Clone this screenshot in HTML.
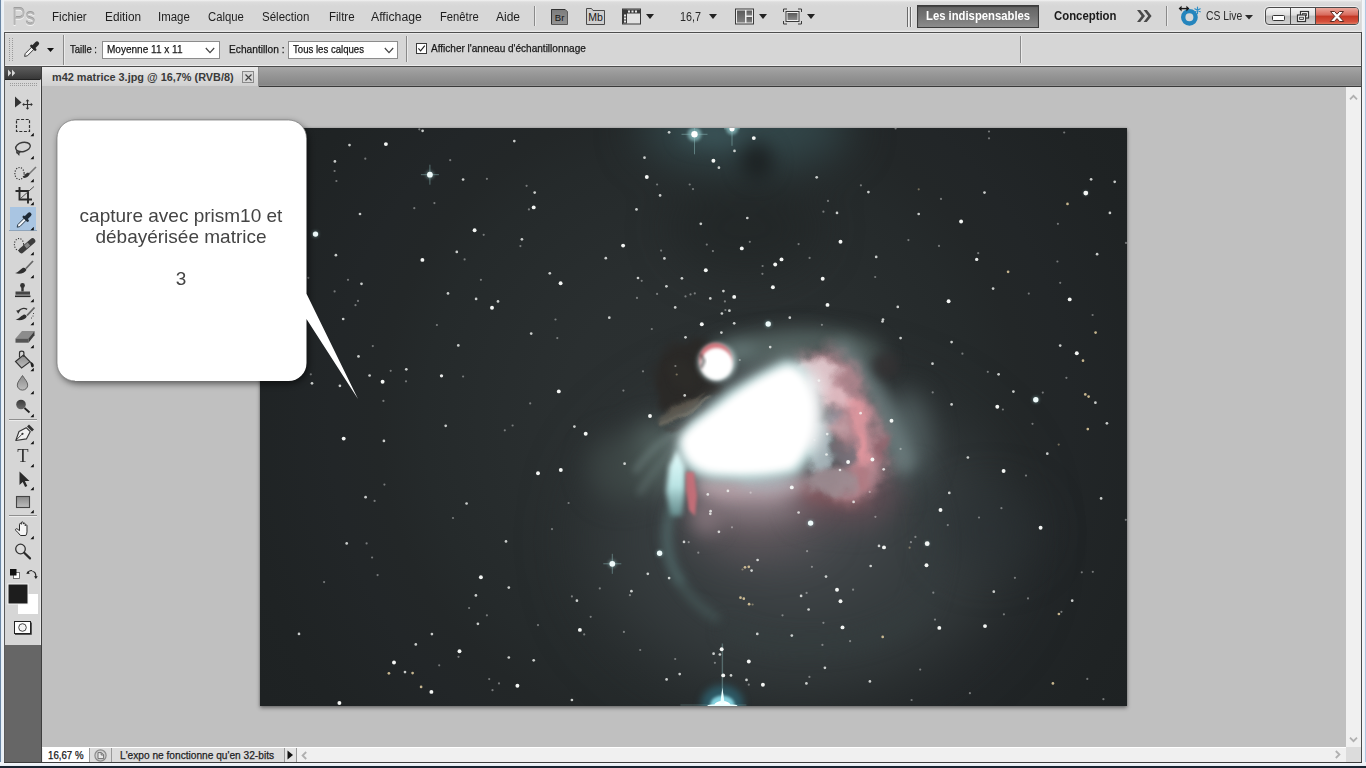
<!DOCTYPE html>
<html lang="fr">
<head>
<meta charset="utf-8">
<title>m42 matrice 3.jpg @ 16,7% (RVB/8)</title>
<style>
*{box-sizing:border-box;margin:0;padding:0}
html,body{width:1366px;height:768px;overflow:hidden;background:#1a2532}
body{font-family:"Liberation Sans",sans-serif;font-size:12px;color:#1a1a1a;position:relative}
#app,#app div,#app span,#app svg{position:absolute}
#app{left:0;top:0;width:1366px;height:768px;overflow:hidden;background:#d6d6d6}
.t{white-space:pre;line-height:1;transform-origin:0 0;display:block}
/* window frame */
#fl{left:0;top:0;width:4px;height:766px;background:linear-gradient(90deg,#6b87a5 0,#6b87a5 1px,#e4ecf4 1px,#f0f4f8 4px)}
#fl2{left:4px;top:32px;width:1px;height:731px;background:#5a5a5a}
#fr{left:1361px;top:0;width:5px;height:766px;background:linear-gradient(90deg,#4a4a4a 0,#4a4a4a 1px,#f6f8fb 1px,#eaf0f6 4px,#b0c8e2 4px)}
#frt{left:1361px;top:0;width:1px;height:32px;background:#dcdcdc}
#fb{left:0;top:762px;width:1366px;height:6px;background:linear-gradient(180deg,#3c3c3c 0,#3c3c3c 1px,#f4f7fa 1px,#e6ecf3 4px,#1a2532 4px)}
#fbl{left:0;top:762px;width:4px;height:1px;background:#eef3f8}#fbr{left:1362px;top:762px;width:4px;height:1px;background:#eef3f8}
/* bars */
#menubar{left:4px;top:0;width:1358px;height:32px;background:linear-gradient(180deg,#f2f2f2 0,#dcdcdc 2px,#d7d7d7 6px,#d7d7d7 30px,#e6e6e6 31px,#eeeeee 32px)}
#mline{left:4px;top:32px;width:1358px;height:1px;background:#4e4e4e}
#optbar{left:5px;top:33px;width:1356px;height:33px;background:#d6d6d6;border-top:1px solid #e9e9e9;border-bottom:1px solid #ededed}
#oline{left:4px;top:66px;width:1358px;height:1px;background:#4a4a4a}
#tabbar{left:5px;top:67px;width:1356px;height:19px;background:linear-gradient(180deg,#a6a6a6 0,#9a9a9a 30%,#868686 94%,#9a9a9a 100%)}
#tline{left:5px;top:86px;width:1356px;height:1px;background:#3a3a3a}
#canvas{left:42px;top:87px;width:1304px;height:660px;background:#c0c0c0;overflow:hidden}
#tools{left:5px;top:67px;width:36px;height:695px;background:#666}
#toolsr{left:41px;top:67px;width:1px;height:695px;background:#3e3e3e}
#toolhead{left:0;top:0;width:36px;height:12px;background:linear-gradient(180deg,#5c5c5c,#383838)}
#toolbody{left:0;top:12px;width:36px;height:566px;background:#d6d6d6;border-top:1px solid #222;border-right:1px solid #e6e6e6}
#vscroll{left:1346px;top:87px;width:15px;height:660px;background:#f0f0f0}
#status{left:42px;top:747px;width:1319px;height:15px;background:#f0f0f0}
.vsep{width:1px;background:#8a8a8a;box-shadow:1px 0 0 #eaeaea}
.dd{background:#fff;border:1px solid #8c8c8c}
.bl{text-align:center;font-size:19px;line-height:21px;height:21px;color:#444;white-space:pre}
#opt .t,#st .t{-webkit-text-stroke:.25px #222}

</style>
</head>
<body>
<div id="app">
  <div id="menubar"></div>
  <div id="mline"></div>
  <div id="optbar"></div>
  <div id="oline"></div>
  <div id="tabbar"></div>
  <div id="tline"></div>
  <div id="canvas">
<div style="left:218px;top:41px;width:867px;height:578px;background:#232627;box-shadow:0 2px 4px rgba(0,0,0,.42),0 0 2px rgba(0,0,0,.2)"></div>
<svg id="photo" width="867" height="578" viewBox="260 128 867 578" style="left:218px;top:41px;position:absolute;overflow:hidden">
<defs>
<filter id="b40" color-interpolation-filters="sRGB" x="-60%" y="-60%" width="220%" height="220%"><feGaussianBlur stdDeviation="35"/></filter>
<filter id="b25" color-interpolation-filters="sRGB" x="-60%" y="-60%" width="220%" height="220%"><feGaussianBlur stdDeviation="22"/></filter>
<filter id="b14" color-interpolation-filters="sRGB" x="-60%" y="-60%" width="220%" height="220%"><feGaussianBlur stdDeviation="13"/></filter>
<filter id="b10" color-interpolation-filters="sRGB" x="-60%" y="-60%" width="220%" height="220%"><feGaussianBlur stdDeviation="9"/></filter>
<filter id="b7" color-interpolation-filters="sRGB" x="-60%" y="-60%" width="220%" height="220%"><feGaussianBlur stdDeviation="6.5"/></filter>
<filter id="b5" color-interpolation-filters="sRGB" x="-60%" y="-60%" width="220%" height="220%"><feGaussianBlur stdDeviation="5"/></filter>
<filter id="b4" color-interpolation-filters="sRGB" x="-60%" y="-60%" width="220%" height="220%"><feGaussianBlur stdDeviation="3.8"/></filter>
<filter id="b3" color-interpolation-filters="sRGB" x="-60%" y="-60%" width="220%" height="220%"><feGaussianBlur stdDeviation="2.6"/></filter>
<filter id="b2" color-interpolation-filters="sRGB" x="-60%" y="-60%" width="220%" height="220%"><feGaussianBlur stdDeviation="1.8"/></filter>
<filter id="bs" color-interpolation-filters="sRGB" x="-5%" y="-5%" width="110%" height="110%"><feGaussianBlur stdDeviation="0.6"/></filter>
<filter id="b1" color-interpolation-filters="sRGB" x="-60%" y="-60%" width="220%" height="220%"><feGaussianBlur stdDeviation="0.8"/></filter>
<filter id="tx" color-interpolation-filters="sRGB" x="-20%" y="-20%" width="140%" height="140%"><feTurbulence type="fractalNoise" baseFrequency="0.045" numOctaves="3" seed="7" result="n"/><feDisplacementMap in="SourceGraphic" in2="n" scale="18" xChannelSelector="R" yChannelSelector="G"/></filter>
<filter id="tx2" color-interpolation-filters="sRGB" x="-20%" y="-20%" width="140%" height="140%"><feTurbulence type="fractalNoise" baseFrequency="0.03" numOctaves="2" seed="3" result="n"/><feDisplacementMap in="SourceGraphic" in2="n" scale="22" xChannelSelector="R" yChannelSelector="G"/></filter>
<linearGradient id="tsg" x1="0" x2="0" y1="0" y2="1"><stop offset="0" stop-color="#e8ffff"/><stop offset=".55" stop-color="#c0ecec" stop-opacity=".95"/><stop offset="1" stop-color="#7ab0b0" stop-opacity=".6"/></linearGradient>
<radialGradient id="bgg" gradientUnits="userSpaceOnUse" cx="700" cy="420" r="520"><stop offset="0" stop-color="#2c3132"/><stop offset=".27" stop-color="#2a2f30"/><stop offset=".53" stop-color="#252a2b"/><stop offset=".62" stop-color="#232728"/><stop offset=".71" stop-color="#222628"/><stop offset=".89" stop-color="#1f2324"/><stop offset="1" stop-color="#1e2223"/></radialGradient>
</defs>
<rect x="260" y="128" width="867" height="578" fill="url(#bgg)"/>
<!-- top teal glow + dark patches -->
<g filter="url(#b25)">
 <ellipse cx="745" cy="128" rx="105" ry="40" fill="#34494c" opacity=".95"/>
 <ellipse cx="745" cy="228" rx="75" ry="48" fill="#1d2122" opacity=".45"/>
</g>
<g filter="url(#b10)">
 <ellipse cx="712" cy="134" rx="32" ry="12" fill="#3d585c" opacity=".7"/>
 <ellipse cx="757" cy="162" rx="17" ry="19" fill="#1c2021" opacity=".9"/>
</g>
<!-- general nebula haze -->
<g filter="url(#b40)">
 <ellipse cx="800" cy="540" rx="205" ry="150" fill="#363c3e" opacity="1"/>
 <ellipse cx="790" cy="486" rx="105" ry="100" fill="#494c50" opacity="1"/>
</g>
<g filter="url(#b25)">
 <ellipse cx="772" cy="420" rx="80" ry="55" fill="#566466" opacity=".9" transform="rotate(-25 772 420)"/>
 <ellipse cx="990" cy="530" rx="50" ry="40" fill="#2a3133" opacity=".6"/>
 <ellipse cx="755" cy="520" rx="62" ry="30" fill="#6c5e64" opacity=".85"/>
</g>
<g filter="url(#b14)">
 <ellipse cx="906" cy="440" rx="24" ry="48" fill="#566465" opacity=".85"/>
 <ellipse cx="654" cy="458" rx="27" ry="36" fill="#5a6a67" opacity=".9"/>
 <ellipse cx="622" cy="468" rx="34" ry="34" fill="#3f4947" opacity=".8"/>
 <ellipse cx="756" cy="498" rx="62" ry="20" fill="#94848b" opacity=".95"/>
</g>
<g filter="url(#b10)">
 <ellipse cx="778" cy="346" rx="72" ry="15" fill="#566664" opacity=".9" transform="rotate(-6 778 346)"/>
 <ellipse cx="858" cy="348" rx="28" ry="13" fill="#54625f" opacity=".85" transform="rotate(20 858 348)"/>
 <ellipse cx="738" cy="352" rx="18" ry="12" fill="#6c807e" opacity=".8"/>
 <ellipse cx="706" cy="518" rx="15" ry="17" fill="#86767c" opacity=".85"/>
</g>
<!-- outer loop arcs -->
<g filter="url(#b5)" fill="none" stroke-linecap="round">
 <path d="M673 505 C664 528 664 555 679 580" stroke="#5a7a7a" stroke-width="10" opacity=".6"/><path d="M679 580 C688 596 700 608 716 618" stroke="#547270" stroke-width="9" opacity=".4"/>
</g>
<g filter="url(#b10)" fill="none" stroke-linecap="round">
 <path d="M730 630 C790 655 860 650 910 620" stroke="#34403f" stroke-width="14" opacity=".5"/>
 <path d="M915 470 C935 510 940 560 920 610" stroke="#333c3d" stroke-width="18" opacity=".5"/>
</g>
<!-- left halo streaks -->
<g filter="url(#b4)" fill="none" stroke-linecap="round" opacity=".5">
 <path d="M636 470 C650 450 664 438 680 430" stroke="#7a8e8c" stroke-width="6"/>
 <path d="M640 492 C652 472 664 457 678 448" stroke="#687a78" stroke-width="6"/>
</g>
<!-- lower maroon tint -->
<g filter="url(#b14)">
 <path d="M790 478 L885 466 L902 500 L868 526 L800 520 Z" fill="#6a5058" opacity=".7"/>
</g>
<g filter="url(#b7)">
 <path d="M696 478 L760 482 L800 476 L822 488 L772 500 L722 500 L698 494 Z" fill="#b8a0a8" opacity=".8"/>
 <path d="M740 476 L780 474 L800 482 L770 492 L742 488 Z" fill="#a0aab4" opacity=".6"/>
 <path d="M800 482 L840 490 L874 496 L856 508 L806 502 Z" fill="#8a5a60" opacity=".7"/>
</g>
<!-- pink region -->
<g filter="url(#b7)" fill="none" stroke-linecap="round">
 <path d="M842 350 C866 372 884 408 904 462" stroke="#6c7c7e" stroke-width="22" opacity=".85"/>
</g>
<g filter="url(#b5)"><ellipse cx="886" cy="366" rx="13" ry="13" fill="#343233" opacity=".8"/></g>
<g filter="url(#tx)">
<g filter="url(#b7)">
 <path d="M796 358 L826 350 L850 362 L866 390 L880 426 L888 456 L880 486 L862 500 L838 498 L846 470 L840 440 L828 410 L812 384 Z" fill="#b88a92" opacity=".92"/>
</g>
<g filter="url(#b4)">
 <ellipse cx="816" cy="374" rx="22" ry="15" fill="#e2cace" opacity=".9"/>
 <ellipse cx="836" cy="396" rx="17" ry="13" fill="#e4c0c5" opacity=".85" transform="rotate(30 836 396)"/>
 <ellipse cx="838" cy="428" rx="12" ry="10" fill="#c8a4aa" opacity=".8"/>
 <ellipse cx="832" cy="418" rx="6" ry="6" fill="#8e94a0" opacity=".8"/>
 <ellipse cx="845" cy="456" rx="10" ry="11" fill="#747078" opacity=".92"/>
 <ellipse cx="820" cy="448" rx="13" ry="26" fill="#aab8be" opacity=".92"/>
 <ellipse cx="832" cy="482" rx="26" ry="12" fill="#9e8e94" opacity=".9"/>
 <ellipse cx="857" cy="414" rx="6" ry="20" fill="#e49aa2" opacity=".9" transform="rotate(-22 857 414)"/>
 <ellipse cx="862" cy="448" rx="6" ry="20" fill="#e6989f" opacity=".92" transform="rotate(-6 862 448)"/>
 <ellipse cx="863" cy="480" rx="6" ry="14" fill="#b07880" opacity=".8" transform="rotate(-14 863 480)"/>
 <ellipse cx="882" cy="446" rx="6" ry="16" fill="#93606a" opacity=".7"/>
</g>
</g>
<!-- dark lane (brownish) -->
<g filter="url(#tx2)">
<g filter="url(#b4)">
 <path d="M664 346 L700 338 L703 352 L699 368 L704 380 L722 389 L708 399 L690 406 L670 413 L656 406 L652 380 Z" fill="#2a2826" opacity=".92"/>
</g>
<g filter="url(#b3)"><ellipse cx="680" cy="410" rx="24" ry="6" fill="#6a645a" opacity=".75" transform="rotate(-28 680 410)"/><ellipse cx="680" cy="372" rx="14" ry="16" fill="#2e2c2a" opacity=".7"/></g>
<g filter="url(#b2)" fill="none" stroke-linecap="round">
 <path d="M662 424 C678 419 694 411 708 400" stroke="#7c766a" stroke-width="3.500" opacity=".7"/>
 <path d="M672 410 C684 406 694 400 702 393" stroke="#5a544c" stroke-width="3" opacity=".65"/>
 <path d="M668 430 C682 428 696 420 706 412" stroke="#3a3836" stroke-width="3" opacity=".7"/>
</g>
</g>
<!-- soft wide glow around core -->
<g filter="url(#b10)">
 <path d="M676 440 C688 420 712 404 730 390 C750 376 774 362 790 357 C808 358 818 380 821 400 C824 426 818 456 798 476 C770 484 728 484 704 480 C684 474 674 458 676 440 Z" fill="#dff0f0" opacity=".55"/>
</g>
<!-- teal glow around core -->
<g filter="url(#b5)">
 <path d="M679 442 L690 424 L710 410 L728 394 L756 377 L786 361 L803 367 L815 390 L818 422 L811 455 L796 473 L750 479 L712 477 L692 471 L680 458 Z" fill="#a9cfcf" opacity=".92"/>
</g>
<g filter="url(#b7)">
 <ellipse cx="810" cy="412" rx="13" ry="40" fill="#f6f0f2" opacity=".85"/>
</g>
<!-- teal stripe lower-left -->
<g filter="url(#b3)">
 <path d="M677 450 L685 466 L685 490 L682 516 L671 516 L666 492 L669 466 Z" fill="url(#tsg)"/>
</g>
<!-- core -->
<g filter="url(#b5)">
 <path d="M681 438 C690 424 712 412 730 397 C748 384 772 370 788 365 C802 366 810 384 813 400 C816 424 812 450 794 469 C770 476 730 476 708 473 C690 468 680 456 681 438 Z" fill="#fff"/>
</g>
<g filter="url(#b4)">
 <path d="M688 440 C698 426 716 416 732 402 C750 390 770 378 786 372 C798 374 805 390 807 404 C810 424 806 446 790 463 C768 470 732 470 712 467 C696 462 687 452 688 440 Z" fill="#fff"/>
</g>
<!-- red stripe lower-left -->
<g filter="url(#b2)">
 <path d="M686 472 L694 472 L697 496 L695 516 L689 510 L686 490 Z" fill="#cc707a" opacity=".9"/>
</g>
<!-- M43 -->
<g filter="url(#b3)">
 <circle cx="717" cy="362.500" r="19" fill="#c4d8d8" opacity=".8"/>
</g>
<circle cx="715.500" cy="359" r="16" fill="#d8747c" filter="url(#b2)" opacity=".95"/>
<circle cx="716.500" cy="364" r="16" fill="#fff" filter="url(#b2)"/>
<circle cx="717" cy="364" r="12" fill="#fff" filter="url(#b1)"/>
<path d="M700.500 354 L704 361 L701 368" fill="none" stroke="#2a2a2a" stroke-width="3" filter="url(#b2)" opacity=".6"/>
<g filter="url(#b2)"><circle cx="429.9" cy="174.7" r="4.3" fill="#9fd0d0" opacity=".38"/><circle cx="315.5" cy="234.1" r="3.3999999999999995" fill="#9fd0d0" opacity=".38"/><circle cx="1085.8" cy="193.1" r="2.4000000000000004" fill="#9fd0d0" opacity=".38"/><circle cx="768.2" cy="324.0" r="3.3999999999999995" fill="#9fd0d0" opacity=".38"/><circle cx="1035.8" cy="399.7" r="3.3999999999999995" fill="#9fd0d0" opacity=".38"/><circle cx="612.3" cy="563.8" r="4.3" fill="#9fd0d0" opacity=".38"/><circle cx="659.6" cy="553.2" r="3.3999999999999995" fill="#9fd0d0" opacity=".38"/><circle cx="810.6" cy="523.1" r="3.3999999999999995" fill="#9fd0d0" opacity=".38"/><circle cx="927.2" cy="543.7" r="2.4000000000000004" fill="#9fd0d0" opacity=".38"/>
<circle cx="694.5" cy="134.3" r="7" fill="#8fc4c8" opacity=".7"/>
<circle cx="732.0" cy="128.8" r="6" fill="#8fc4c8" opacity=".7"/>
<ellipse cx="722.4" cy="703.5" rx="21" ry="18" fill="#2f6878" opacity=".75" filter="url(#b4)"/><ellipse cx="722.4" cy="704.5" rx="12" ry="9" fill="#8fe0ec" opacity=".9"/>
</g>
<g filter="url(#bs)" stroke="#8fbcbc" stroke-width="1" opacity=".5" fill="none"><path d="M420.9 174.7H438.9M429.9 164.7V184.7"/><path d="M603.3 563.8H621.3M612.3 553.8V573.8"/>
<path d="M681.5 134.3H707.5M694.5 126.3V154.3"/>
<path d="M724.0 128.8H740.0M732.0 126.8V145.8"/>
<path d="M722.4 643.5V706.5" stroke-width="1.4" opacity=".8"/><path d="M680.4 705.0H746.4" stroke-width="1.2" opacity=".7"/>
</g>
<g filter="url(#bs)"><circle cx="429.9" cy="174.7" r="2.9" fill="#eefafa" opacity="1"/><circle cx="315.5" cy="234.1" r="2.7" fill="#eefafa" opacity="1"/><circle cx="422.4" cy="259.9" r="1.95" fill="#f4f6f4" opacity="1"/><circle cx="385.9" cy="144.1" r="1.95" fill="#f4f6f4" opacity="1"/><circle cx="349.5" cy="145.1" r="1.35" fill="#f4f6f4" opacity="0.8"/><circle cx="474.6" cy="230.3" r="1.95" fill="#f4f6f4" opacity="1"/><circle cx="533.7" cy="207.4" r="1.95" fill="#f4f6f4" opacity="1"/><circle cx="463.1" cy="179.5" r="1.35" fill="#f4f6f4" opacity="0.8"/><circle cx="514.3" cy="141.1" r="1.35" fill="#f4f6f4" opacity="0.8"/><circle cx="422.6" cy="130.8" r="1.35" fill="#f4f6f4" opacity="0.8"/><circle cx="419.3" cy="129.3" r="1.1" fill="#f4f6f4" opacity="0.4"/><circle cx="334.9" cy="161.4" r="1.35" fill="#f4f6f4" opacity="0.8"/><circle cx="334.6" cy="171.0" r="1.1" fill="#f4f6f4" opacity="0.4"/><circle cx="336.4" cy="181.0" r="1.1" fill="#f4f6f4" opacity="0.4"/><circle cx="360.0" cy="214.0" r="1.35" fill="#f4f6f4" opacity="0.8"/><circle cx="335.9" cy="255.2" r="1.35" fill="#f4f6f4" opacity="0.8"/><circle cx="361.5" cy="283.8" r="1.35" fill="#f4f6f4" opacity="0.8"/><circle cx="348.0" cy="279.8" r="1.1" fill="#f4f6f4" opacity="0.4"/><circle cx="308.3" cy="277.8" r="1.1" fill="#f4f6f4" opacity="0.4"/><circle cx="492.0" cy="307.7" r="1.95" fill="#f4f6f4" opacity="1"/><circle cx="498.0" cy="301.4" r="1.35" fill="#f4f6f4" opacity="0.8"/><circle cx="476.1" cy="298.9" r="1.35" fill="#f4f6f4" opacity="0.8"/><circle cx="448.0" cy="293.4" r="1.35" fill="#f4f6f4" opacity="0.8"/><circle cx="456.8" cy="251.9" r="1.35" fill="#f4f6f4" opacity="0.8"/><circle cx="464.6" cy="259.4" r="1.1" fill="#f4f6f4" opacity="0.4"/><circle cx="483.7" cy="234.8" r="1.1" fill="#f4f6f4" opacity="0.4"/><circle cx="521.9" cy="239.3" r="1.35" fill="#f4f6f4" opacity="0.8"/><circle cx="520.4" cy="246.1" r="1.1" fill="#f4f6f4" opacity="0.4"/><circle cx="526.6" cy="185.8" r="1.1" fill="#f4f6f4" opacity="0.4"/><circle cx="534.7" cy="192.6" r="1.35" fill="#f4f6f4" opacity="0.8"/><circle cx="486.9" cy="178.8" r="1.1" fill="#f4f6f4" opacity="0.4"/><circle cx="450.2" cy="160.2" r="1.1" fill="#f4f6f4" opacity="0.4"/><circle cx="343.2" cy="319.0" r="1.35" fill="#f4f6f4" opacity="0.8"/><circle cx="334.6" cy="291.4" r="1.1" fill="#f4f6f4" opacity="0.4"/><circle cx="358.0" cy="300.9" r="1.1" fill="#f4f6f4" opacity="0.4"/><circle cx="355.5" cy="305.2" r="1.1" fill="#f4f6f4" opacity="0.4"/><circle cx="528.9" cy="209.4" r="1.1" fill="#f4f6f4" opacity="0.4"/><circle cx="480.9" cy="279.8" r="1.1" fill="#f4f6f4" opacity="0.4"/><circle cx="434.4" cy="203.1" r="1.1" fill="#f4f6f4" opacity="0.4"/><circle cx="414.3" cy="208.2" r="1.1" fill="#f4f6f4" opacity="0.4"/><circle cx="365.3" cy="158.7" r="1.1" fill="#f4f6f4" opacity="0.4"/><circle cx="753.8" cy="138.1" r="1.95" fill="#f4f6f4" opacity="1"/><circle cx="713.4" cy="160.7" r="1.95" fill="#f4f6f4" opacity="1"/><circle cx="734.5" cy="150.9" r="1.35" fill="#f4f6f4" opacity="0.8"/><circle cx="718.9" cy="167.7" r="1.35" fill="#f4f6f4" opacity="0.8"/><circle cx="646.8" cy="177.0" r="1.95" fill="#f4f6f4" opacity="1"/><circle cx="644.5" cy="157.7" r="1.35" fill="#f4f6f4" opacity="0.8"/><circle cx="660.1" cy="195.4" r="1.35" fill="#f4f6f4" opacity="0.8"/><circle cx="636.5" cy="209.4" r="1.35" fill="#f4f6f4" opacity="0.8"/><circle cx="623.1" cy="245.6" r="1.95" fill="#f4f6f4" opacity="1"/><circle cx="560.6" cy="283.3" r="1.95" fill="#f4f6f4" opacity="1"/><circle cx="549.8" cy="273.3" r="1.35" fill="#f4f6f4" opacity="0.8"/><circle cx="664.4" cy="258.4" r="1.35" fill="#f4f6f4" opacity="0.8"/><circle cx="705.8" cy="270.2" r="1.95" fill="#f4f6f4" opacity="1"/><circle cx="741.8" cy="248.4" r="1.95" fill="#f4f6f4" opacity="1"/><circle cx="775.2" cy="264.5" r="1.95" fill="#f4f6f4" opacity="1"/><circle cx="781.5" cy="259.4" r="1.95" fill="#f4f6f4" opacity="1"/><circle cx="772.9" cy="287.3" r="1.95" fill="#f4f6f4" opacity="1"/><circle cx="822.7" cy="278.8" r="1.95" fill="#f4f6f4" opacity="1"/><circle cx="827.5" cy="304.9" r="1.95" fill="#f4f6f4" opacity="1"/><circle cx="734.2" cy="296.9" r="1.95" fill="#f4f6f4" opacity="1"/><circle cx="723.4" cy="291.1" r="1.35" fill="#f4f6f4" opacity="0.8"/><circle cx="710.3" cy="298.4" r="1.35" fill="#f4f6f4" opacity="0.8"/><circle cx="681.9" cy="278.3" r="1.35" fill="#f4f6f4" opacity="0.8"/><circle cx="666.4" cy="286.3" r="1.35" fill="#f4f6f4" opacity="0.8"/><circle cx="638.0" cy="278.0" r="1.35" fill="#f4f6f4" opacity="0.8"/><circle cx="641.7" cy="280.8" r="1.1" fill="#f4f6f4" opacity="0.4"/><circle cx="605.8" cy="258.2" r="1.35" fill="#f4f6f4" opacity="0.8"/><circle cx="700.8" cy="223.8" r="1.35" fill="#f4f6f4" opacity="0.8"/><circle cx="747.3" cy="218.0" r="1.35" fill="#f4f6f4" opacity="0.8"/><circle cx="816.7" cy="177.3" r="1.35" fill="#f4f6f4" opacity="0.8"/><circle cx="837.0" cy="212.9" r="1.35" fill="#f4f6f4" opacity="0.8"/><circle cx="675.2" cy="307.4" r="1.35" fill="#f4f6f4" opacity="0.8"/><circle cx="609.3" cy="317.7" r="1.35" fill="#f4f6f4" opacity="0.8"/><circle cx="669.1" cy="132.3" r="1.35" fill="#f4f6f4" opacity="0.8"/><circle cx="712.9" cy="251.1" r="1.1" fill="#f4f6f4" opacity="0.4"/><circle cx="661.1" cy="250.6" r="1.1" fill="#f4f6f4" opacity="0.4"/><circle cx="694.8" cy="293.4" r="1.1" fill="#f4f6f4" opacity="0.4"/><circle cx="690.5" cy="294.4" r="1.1" fill="#f4f6f4" opacity="0.4"/><circle cx="685.5" cy="296.4" r="1.1" fill="#f4f6f4" opacity="0.4"/><circle cx="724.9" cy="301.4" r="1.1" fill="#f4f6f4" opacity="0.4"/><circle cx="729.4" cy="310.7" r="1.35" fill="#f4f6f4" opacity="0.8"/><circle cx="725.4" cy="310.0" r="1.1" fill="#f4f6f4" opacity="0.4"/><circle cx="721.9" cy="313.5" r="1.35" fill="#f4f6f4" opacity="0.8"/><circle cx="789.8" cy="317.7" r="1.35" fill="#f4f6f4" opacity="0.8"/><circle cx="762.4" cy="273.8" r="1.1" fill="#f4f6f4" opacity="0.4"/><circle cx="762.6" cy="266.0" r="1.1" fill="#f4f6f4" opacity="0.4"/><circle cx="828.0" cy="200.9" r="1.1" fill="#f4f6f4" opacity="0.4"/><circle cx="823.4" cy="211.7" r="1.1" fill="#f4f6f4" opacity="0.4"/><circle cx="555.5" cy="319.5" r="1.1" fill="#f4f6f4" opacity="0.4"/><circle cx="637.0" cy="297.9" r="1.1" fill="#f4f6f4" opacity="0.4"/><circle cx="657.1" cy="293.9" r="1.1" fill="#f4f6f4" opacity="0.4"/><circle cx="689.7" cy="184.5" r="1.1" fill="#f4f6f4" opacity="0.4"/><circle cx="693.0" cy="189.1" r="1.1" fill="#f4f6f4" opacity="0.4"/><circle cx="657.1" cy="184.5" r="1.1" fill="#f4f6f4" opacity="0.4"/><circle cx="706.8" cy="244.6" r="1.1" fill="#f4f6f4" opacity="0.4"/><circle cx="749.8" cy="241.8" r="1.1" fill="#f4f6f4" opacity="0.4"/><circle cx="798.6" cy="244.1" r="1.1" fill="#f4f6f4" opacity="0.4"/><circle cx="809.6" cy="257.9" r="1.1" fill="#f4f6f4" opacity="0.4"/><circle cx="1085.8" cy="193.1" r="2.4" fill="#f4f6f4" opacity="1"/><circle cx="961.1" cy="221.5" r="1.95" fill="#f4f6f4" opacity="1"/><circle cx="948.6" cy="301.2" r="1.95" fill="#f4f6f4" opacity="1"/><circle cx="1069.7" cy="299.4" r="1.95" fill="#f4f6f4" opacity="1"/><circle cx="976.7" cy="259.4" r="1.65" fill="#f4f6f4" opacity="0.95"/><circle cx="840.5" cy="241.8" r="1.95" fill="#f4f6f4" opacity="1"/><circle cx="876.2" cy="256.9" r="1.35" fill="#f4f6f4" opacity="0.8"/><circle cx="897.8" cy="306.9" r="1.35" fill="#f4f6f4" opacity="0.8"/><circle cx="984.5" cy="192.6" r="1.35" fill="#f4f6f4" opacity="0.8"/><circle cx="918.7" cy="214.0" r="1.35" fill="#f4f6f4" opacity="0.8"/><circle cx="868.4" cy="192.1" r="1.35" fill="#f4f6f4" opacity="0.8"/><circle cx="1091.1" cy="179.3" r="1.35" fill="#f4f6f4" opacity="0.8"/><circle cx="1114.7" cy="181.8" r="1.35" fill="#f4f6f4" opacity="0.8"/><circle cx="1109.9" cy="212.9" r="1.35" fill="#f4f6f4" opacity="0.8"/><circle cx="1097.1" cy="254.2" r="1.35" fill="#f4f6f4" opacity="0.8"/><circle cx="1008.1" cy="271.8" r="1.35" fill="#f0d9a8" opacity="0.8"/><circle cx="993.1" cy="288.6" r="1.35" fill="#f4f6f4" opacity="0.8"/><circle cx="1067.5" cy="203.9" r="1.35" fill="#f0d9a8" opacity="0.8"/><circle cx="1057.9" cy="223.8" r="1.1" fill="#f4f6f4" opacity="0.4"/><circle cx="1057.4" cy="261.5" r="1.1" fill="#f4f6f4" opacity="0.4"/><circle cx="1060.2" cy="282.8" r="1.1" fill="#f4f6f4" opacity="0.4"/><circle cx="939.0" cy="245.9" r="1.1" fill="#f4f6f4" opacity="0.4"/><circle cx="918.7" cy="189.3" r="1.1" fill="#f0d9a8" opacity="0.4"/><circle cx="860.9" cy="185.3" r="1.1" fill="#f4f6f4" opacity="0.4"/><circle cx="989.0" cy="131.5" r="1.1" fill="#f4f6f4" opacity="0.4"/><circle cx="989.0" cy="138.3" r="1.1" fill="#f4f6f4" opacity="0.4"/><circle cx="895.6" cy="128.5" r="1.1" fill="#f4f6f4" opacity="0.4"/><circle cx="1064.2" cy="132.5" r="1.1" fill="#f4f6f4" opacity="0.4"/><circle cx="1028.8" cy="293.6" r="1.1" fill="#f4f6f4" opacity="0.4"/><circle cx="883.0" cy="319.5" r="1.35" fill="#f4f6f4" opacity="0.8"/><circle cx="875.2" cy="277.0" r="1.1" fill="#f4f6f4" opacity="0.4"/><circle cx="1092.6" cy="315.0" r="1.1" fill="#f4f6f4" opacity="0.4"/><circle cx="1126.0" cy="242.9" r="1.1" fill="#f4f6f4" opacity="0.4"/><circle cx="978.2" cy="253.2" r="1.1" fill="#f4f6f4" opacity="0.4"/><circle cx="941.0" cy="198.9" r="1.1" fill="#f4f6f4" opacity="0.4"/><circle cx="908.4" cy="240.1" r="1.1" fill="#f4f6f4" opacity="0.4"/><circle cx="343.7" cy="438.6" r="1.95" fill="#f4f6f4" opacity="1"/><circle cx="382.6" cy="381.8" r="1.95" fill="#f4f6f4" opacity="1"/><circle cx="441.5" cy="375.8" r="1.65" fill="#f4f6f4" opacity="0.95"/><circle cx="538.0" cy="473.3" r="1.95" fill="#f4f6f4" opacity="1"/><circle cx="369.6" cy="375.5" r="1.35" fill="#f4f6f4" opacity="0.8"/><circle cx="383.9" cy="440.9" r="1.35" fill="#f4f6f4" opacity="0.8"/><circle cx="358.5" cy="356.4" r="1.35" fill="#f4f6f4" opacity="0.8"/><circle cx="312.0" cy="383.3" r="1.35" fill="#f4f6f4" opacity="0.8"/><circle cx="339.9" cy="385.8" r="1.35" fill="#f4f6f4" opacity="0.8"/><circle cx="406.3" cy="369.3" r="1.35" fill="#f4f6f4" opacity="0.8"/><circle cx="458.3" cy="345.4" r="1.35" fill="#f4f6f4" opacity="0.8"/><circle cx="531.2" cy="333.6" r="1.35" fill="#f4f6f4" opacity="0.8"/><circle cx="445.7" cy="425.8" r="1.35" fill="#f4f6f4" opacity="0.8"/><circle cx="466.6" cy="503.5" r="1.35" fill="#f4f6f4" opacity="0.8"/><circle cx="365.6" cy="497.2" r="1.35" fill="#f4f6f4" opacity="0.8"/><circle cx="504.8" cy="430.3" r="1.1" fill="#f4f6f4" opacity="0.4"/><circle cx="512.6" cy="425.5" r="1.1" fill="#f4f6f4" opacity="0.4"/><circle cx="530.2" cy="403.4" r="1.1" fill="#f4f6f4" opacity="0.4"/><circle cx="383.4" cy="400.9" r="1.1" fill="#f4f6f4" opacity="0.4"/><circle cx="436.9" cy="325.0" r="1.1" fill="#f4f6f4" opacity="0.4"/><circle cx="390.7" cy="370.8" r="1.1" fill="#f4f6f4" opacity="0.4"/><circle cx="406.0" cy="381.3" r="1.1" fill="#f4f6f4" opacity="0.4"/><circle cx="463.1" cy="376.5" r="1.1" fill="#f4f6f4" opacity="0.4"/><circle cx="384.4" cy="484.6" r="1.1" fill="#f4f6f4" opacity="0.4"/><circle cx="374.6" cy="500.9" r="1.1" fill="#f4f6f4" opacity="0.4"/><circle cx="310.8" cy="374.3" r="1.1" fill="#f4f6f4" opacity="0.4"/><circle cx="372.8" cy="346.1" r="1.1" fill="#f4f6f4" opacity="0.4"/><circle cx="768.2" cy="324.0" r="2.7" fill="#eefafa" opacity="1"/><circle cx="701.8" cy="324.3" r="1.95" fill="#f4f6f4" opacity="1"/><circle cx="734.2" cy="323.3" r="1.35" fill="#f4f6f4" opacity="0.8"/><circle cx="650.0" cy="416.0" r="1.95" fill="#f4f6f4" opacity="1"/><circle cx="585.7" cy="433.8" r="1.95" fill="#f4f6f4" opacity="1"/><circle cx="558.8" cy="391.4" r="1.95" fill="#f4f6f4" opacity="1"/><circle cx="560.8" cy="470.0" r="1.95" fill="#f4f6f4" opacity="1"/><circle cx="574.4" cy="426.6" r="1.35" fill="#f4f6f4" opacity="0.8"/><circle cx="684.7" cy="395.4" r="1.35" fill="#f4f6f4" opacity="0.8"/><circle cx="770.2" cy="347.1" r="1.35" fill="#f4f6f4" opacity="0.8"/><circle cx="721.4" cy="332.6" r="1.35" fill="#f4f6f4" opacity="0.8"/><circle cx="685.5" cy="337.3" r="1.35" fill="#f4f6f4" opacity="0.8"/><circle cx="651.8" cy="329.0" r="1.1" fill="#f4f6f4" opacity="0.4"/><circle cx="643.0" cy="371.3" r="1.1" fill="#f4f6f4" opacity="0.4"/><circle cx="675.4" cy="366.0" r="1.1" fill="#f4f6f4" opacity="0.4"/><circle cx="676.7" cy="374.5" r="1.1" fill="#f0d9a8" opacity="0.4"/><circle cx="623.4" cy="390.6" r="1.1" fill="#f4f6f4" opacity="0.4"/><circle cx="624.6" cy="463.7" r="1.35" fill="#f4f6f4" opacity="0.8"/><circle cx="791.8" cy="487.4" r="1.95" fill="#f4f6f4" opacity="1"/><circle cx="707.8" cy="494.4" r="1.35" fill="#f4f6f4" opacity="0.8"/><circle cx="727.9" cy="490.9" r="1.35" fill="#f4f6f4" opacity="0.8"/><circle cx="750.6" cy="492.7" r="1.1" fill="#f4f6f4" opacity="0.4"/><circle cx="710.6" cy="511.2" r="1.35" fill="#f4f6f4" opacity="0.8"/><circle cx="798.6" cy="512.5" r="1.35" fill="#f4f6f4" opacity="0.8"/><circle cx="568.6" cy="503.0" r="1.1" fill="#f4f6f4" opacity="0.4"/><circle cx="557.3" cy="338.1" r="1.1" fill="#f4f6f4" opacity="0.4"/><circle cx="804.6" cy="382.6" r="1.35" fill="#f4f6f4" opacity="0.8"/><circle cx="818.9" cy="380.6" r="1.35" fill="#f4f6f4" opacity="0.8"/><circle cx="827.2" cy="434.1" r="1.35" fill="#f4f6f4" opacity="0.8"/><circle cx="826.5" cy="454.5" r="1.35" fill="#f4f6f4" opacity="0.8"/><circle cx="814.4" cy="439.9" r="1.1" fill="#f4f6f4" opacity="0.4"/><circle cx="739.8" cy="360.0" r="1.1" fill="#f4f6f4" opacity="0.4"/><circle cx="821.9" cy="324.8" r="1.1" fill="#f4f6f4" opacity="0.4"/><circle cx="1035.8" cy="399.7" r="2.7" fill="#eefafa" opacity="1"/><circle cx="891.5" cy="420.8" r="1.95" fill="#f4f6f4" opacity="1"/><circle cx="997.3" cy="406.7" r="1.95" fill="#f4f6f4" opacity="1"/><circle cx="1076.8" cy="353.2" r="1.95" fill="#f4f6f4" opacity="1"/><circle cx="1060.2" cy="345.6" r="1.35" fill="#f4f6f4" opacity="0.8"/><circle cx="932.5" cy="363.7" r="1.35" fill="#f4f6f4" opacity="0.8"/><circle cx="951.6" cy="342.1" r="1.35" fill="#f4f6f4" opacity="0.8"/><circle cx="900.6" cy="338.1" r="1.35" fill="#f4f6f4" opacity="0.8"/><circle cx="951.6" cy="404.4" r="1.35" fill="#f4f6f4" opacity="0.8"/><circle cx="998.6" cy="374.3" r="1.35" fill="#f4f6f4" opacity="0.8"/><circle cx="1013.4" cy="391.6" r="1.35" fill="#f4f6f4" opacity="0.8"/><circle cx="967.9" cy="457.5" r="1.35" fill="#f4f6f4" opacity="0.8"/><circle cx="1003.6" cy="471.0" r="1.95" fill="#f4f6f4" opacity="1"/><circle cx="1047.3" cy="453.7" r="1.35" fill="#f4f6f4" opacity="0.8"/><circle cx="1106.9" cy="423.3" r="1.35" fill="#f4f6f4" opacity="0.8"/><circle cx="1101.1" cy="498.4" r="1.35" fill="#f4f6f4" opacity="0.8"/><circle cx="940.5" cy="510.0" r="1.95" fill="#f4f6f4" opacity="1"/><circle cx="949.3" cy="492.9" r="1.35" fill="#f4f6f4" opacity="0.8"/><circle cx="872.4" cy="459.5" r="1.95" fill="#f4f6f4" opacity="1"/><circle cx="848.1" cy="462.0" r="1.95" fill="#f4f6f4" opacity="1"/><circle cx="883.7" cy="469.3" r="1.35" fill="#f4f6f4" opacity="0.8"/><circle cx="860.6" cy="413.2" r="1.35" fill="#f4f6f4" opacity="0.8"/><circle cx="840.0" cy="470.0" r="1.35" fill="#f4f6f4" opacity="0.8"/><circle cx="853.6" cy="501.9" r="1.35" fill="#f4f6f4" opacity="0.8"/><circle cx="1087.8" cy="429.1" r="1.35" fill="#f0d9a8" opacity="0.8"/><circle cx="1085.3" cy="394.4" r="1.35" fill="#f0d9a8" opacity="0.8"/><circle cx="1088.6" cy="396.6" r="1.35" fill="#f0d9a8" opacity="0.8"/><circle cx="1095.4" cy="402.7" r="1.35" fill="#f4f6f4" opacity="0.8"/><circle cx="1083.0" cy="360.7" r="1.35" fill="#f0d9a8" opacity="0.8"/><circle cx="1095.6" cy="332.6" r="1.35" fill="#f0d9a8" opacity="0.8"/><circle cx="1058.7" cy="444.6" r="1.1" fill="#f0d9a8" opacity="0.4"/><circle cx="900.6" cy="448.9" r="1.1" fill="#f4f6f4" opacity="0.4"/><circle cx="962.4" cy="353.7" r="1.1" fill="#f4f6f4" opacity="0.4"/><circle cx="882.5" cy="321.5" r="1.35" fill="#f4f6f4" opacity="0.8"/><circle cx="1066.4" cy="377.8" r="1.1" fill="#f4f6f4" opacity="0.4"/><circle cx="1042.8" cy="392.6" r="1.1" fill="#f4f6f4" opacity="0.4"/><circle cx="1032.5" cy="423.8" r="1.1" fill="#f4f6f4" opacity="0.4"/><circle cx="1002.9" cy="409.5" r="1.1" fill="#f4f6f4" opacity="0.4"/><circle cx="932.7" cy="392.4" r="1.1" fill="#f4f6f4" opacity="0.4"/><circle cx="1026.0" cy="475.6" r="1.1" fill="#f4f6f4" opacity="0.4"/><circle cx="1001.4" cy="508.2" r="1.1" fill="#f4f6f4" opacity="0.4"/><circle cx="987.8" cy="371.8" r="1.1" fill="#f4f6f4" opacity="0.4"/><circle cx="869.7" cy="491.9" r="1.1" fill="#f4f6f4" opacity="0.4"/><circle cx="517.4" cy="685.7" r="1.95" fill="#f4f6f4" opacity="1"/><circle cx="480.9" cy="577.3" r="1.95" fill="#f4f6f4" opacity="1"/><circle cx="459.5" cy="651.2" r="1.95" fill="#f4f6f4" opacity="1"/><circle cx="431.4" cy="691.9" r="1.95" fill="#f4f6f4" opacity="1"/><circle cx="394.0" cy="662.5" r="1.95" fill="#f4f6f4" opacity="1"/><circle cx="415.8" cy="644.4" r="1.35" fill="#f4f6f4" opacity="0.8"/><circle cx="346.7" cy="543.4" r="1.35" fill="#f4f6f4" opacity="0.8"/><circle cx="299.0" cy="633.9" r="1.35" fill="#f4f6f4" opacity="0.8"/><circle cx="506.0" cy="541.4" r="1.35" fill="#f4f6f4" opacity="0.8"/><circle cx="339.4" cy="703.0" r="1.95" fill="#f4f6f4" opacity="1"/><circle cx="508.8" cy="587.6" r="1.35" fill="#f4f6f4" opacity="0.8"/><circle cx="475.9" cy="595.4" r="1.35" fill="#f4f6f4" opacity="0.8"/><circle cx="477.9" cy="623.8" r="1.35" fill="#f4f6f4" opacity="0.8"/><circle cx="508.8" cy="657.5" r="1.35" fill="#f4f6f4" opacity="0.8"/><circle cx="533.7" cy="660.3" r="1.35" fill="#f4f6f4" opacity="0.8"/><circle cx="405.0" cy="672.1" r="1.35" fill="#f4f6f4" opacity="0.8"/><circle cx="412.6" cy="673.1" r="1.35" fill="#f0d9a8" opacity="0.8"/><circle cx="421.1" cy="686.9" r="1.35" fill="#f0d9a8" opacity="0.8"/><circle cx="388.9" cy="673.3" r="1.35" fill="#f0d9a8" opacity="0.8"/><circle cx="431.9" cy="634.1" r="1.35" fill="#f4f6f4" opacity="0.8"/><circle cx="439.2" cy="665.3" r="1.1" fill="#f4f6f4" opacity="0.4"/><circle cx="458.5" cy="656.8" r="1.1" fill="#f4f6f4" opacity="0.4"/><circle cx="499.0" cy="683.4" r="1.1" fill="#f4f6f4" opacity="0.4"/><circle cx="489.2" cy="679.1" r="1.1" fill="#f4f6f4" opacity="0.4"/><circle cx="492.5" cy="690.2" r="1.1" fill="#f4f6f4" opacity="0.4"/><circle cx="538.0" cy="625.1" r="1.1" fill="#f4f6f4" opacity="0.4"/><circle cx="469.1" cy="608.0" r="1.1" fill="#f4f6f4" opacity="0.4"/><circle cx="486.9" cy="615.3" r="1.1" fill="#f4f6f4" opacity="0.4"/><circle cx="377.6" cy="575.1" r="1.1" fill="#f4f6f4" opacity="0.4"/><circle cx="372.1" cy="557.5" r="1.1" fill="#f4f6f4" opacity="0.4"/><circle cx="324.1" cy="582.1" r="1.1" fill="#f4f6f4" opacity="0.4"/><circle cx="453.0" cy="518.0" r="1.1" fill="#f4f6f4" opacity="0.4"/><circle cx="366.6" cy="543.4" r="1.1" fill="#f4f6f4" opacity="0.4"/><circle cx="612.3" cy="563.8" r="2.9" fill="#eefafa" opacity="1"/><circle cx="659.6" cy="553.2" r="2.7" fill="#eefafa" opacity="1"/><circle cx="810.6" cy="523.1" r="2.7" fill="#eefafa" opacity="1"/><circle cx="579.9" cy="629.9" r="1.95" fill="#f4f6f4" opacity="1"/><circle cx="748.8" cy="661.5" r="1.95" fill="#f4f6f4" opacity="1"/><circle cx="762.9" cy="684.7" r="1.95" fill="#f4f6f4" opacity="1"/><circle cx="721.7" cy="649.2" r="1.95" fill="#f4f6f4" opacity="1"/><circle cx="723.2" cy="675.4" r="1.95" fill="#f4f6f4" opacity="1"/><circle cx="731.0" cy="675.4" r="1.35" fill="#f4f6f4" opacity="0.8"/><circle cx="647.8" cy="573.8" r="1.35" fill="#f4f6f4" opacity="0.8"/><circle cx="669.1" cy="578.1" r="1.35" fill="#f4f6f4" opacity="0.8"/><circle cx="631.4" cy="591.2" r="1.35" fill="#f4f6f4" opacity="0.8"/><circle cx="629.9" cy="595.2" r="1.1" fill="#f4f6f4" opacity="0.4"/><circle cx="576.9" cy="600.7" r="1.35" fill="#f4f6f4" opacity="0.8"/><circle cx="571.9" cy="596.4" r="1.1" fill="#f4f6f4" opacity="0.4"/><circle cx="599.8" cy="588.4" r="1.1" fill="#f4f6f4" opacity="0.4"/><circle cx="590.7" cy="616.8" r="1.1" fill="#f4f6f4" opacity="0.4"/><circle cx="806.4" cy="683.4" r="1.35" fill="#f4f6f4" opacity="0.8"/><circle cx="824.9" cy="667.8" r="1.35" fill="#f4f6f4" opacity="0.8"/><circle cx="826.0" cy="576.6" r="1.35" fill="#f4f6f4" opacity="0.8"/><circle cx="837.0" cy="589.7" r="1.95" fill="#f4f6f4" opacity="1"/><circle cx="801.1" cy="595.9" r="1.35" fill="#f4f6f4" opacity="0.8"/><circle cx="806.6" cy="592.9" r="1.1" fill="#f4f6f4" opacity="0.4"/><circle cx="808.6" cy="609.5" r="1.35" fill="#f4f6f4" opacity="0.8"/><circle cx="791.8" cy="635.6" r="1.35" fill="#f4f6f4" opacity="0.8"/><circle cx="757.3" cy="633.9" r="1.35" fill="#f4f6f4" opacity="0.8"/><circle cx="757.6" cy="560.0" r="1.35" fill="#f4f6f4" opacity="0.8"/><circle cx="745.0" cy="567.3" r="1.35" fill="#f0d9a8" opacity="0.8"/><circle cx="748.8" cy="566.8" r="1.35" fill="#f0d9a8" opacity="0.8"/><circle cx="751.6" cy="570.6" r="1.35" fill="#f4f6f4" opacity="0.8"/><circle cx="742.5" cy="569.5" r="1.1" fill="#f0d9a8" opacity="0.4"/><circle cx="740.5" cy="597.7" r="1.35" fill="#f0d9a8" opacity="0.8"/><circle cx="743.8" cy="598.7" r="1.35" fill="#f0d9a8" opacity="0.8"/><circle cx="749.1" cy="604.2" r="1.35" fill="#f0d9a8" opacity="0.8"/><circle cx="752.6" cy="604.5" r="1.1" fill="#f0d9a8" opacity="0.4"/><circle cx="684.0" cy="541.9" r="1.35" fill="#f4f6f4" opacity="0.8"/><circle cx="688.7" cy="542.2" r="1.1" fill="#f4f6f4" opacity="0.4"/><circle cx="718.9" cy="531.8" r="1.35" fill="#f4f6f4" opacity="0.8"/><circle cx="732.0" cy="527.3" r="1.1" fill="#f4f6f4" opacity="0.4"/><circle cx="698.3" cy="552.7" r="1.1" fill="#f4f6f4" opacity="0.4"/><circle cx="713.6" cy="653.7" r="1.35" fill="#f4f6f4" opacity="0.8"/><circle cx="719.9" cy="654.5" r="1.35" fill="#f4f6f4" opacity="0.8"/><circle cx="714.9" cy="662.8" r="1.1" fill="#f4f6f4" opacity="0.4"/><circle cx="679.7" cy="674.1" r="1.35" fill="#f4f6f4" opacity="0.8"/><circle cx="666.6" cy="679.4" r="1.35" fill="#f4f6f4" opacity="0.8"/><circle cx="675.2" cy="659.0" r="1.1" fill="#f4f6f4" opacity="0.4"/><circle cx="640.2" cy="650.0" r="1.1" fill="#f4f6f4" opacity="0.4"/><circle cx="571.9" cy="700.0" r="1.35" fill="#f4f6f4" opacity="0.8"/><circle cx="552.0" cy="529.1" r="1.1" fill="#f4f6f4" opacity="0.4"/><circle cx="746.5" cy="679.9" r="1.35" fill="#f4f6f4" opacity="0.8"/><circle cx="748.8" cy="684.7" r="1.1" fill="#f4f6f4" opacity="0.4"/><circle cx="809.4" cy="676.9" r="1.1" fill="#f4f6f4" opacity="0.4"/><circle cx="823.4" cy="622.8" r="1.1" fill="#f4f6f4" opacity="0.4"/><circle cx="822.4" cy="644.9" r="1.1" fill="#f4f6f4" opacity="0.4"/><circle cx="782.5" cy="615.3" r="1.1" fill="#f4f6f4" opacity="0.4"/><circle cx="710.3" cy="513.8" r="1.35" fill="#f4f6f4" opacity="0.8"/><circle cx="807.1" cy="551.2" r="1.1" fill="#f4f6f4" opacity="0.4"/><circle cx="811.9" cy="566.8" r="1.1" fill="#f4f6f4" opacity="0.4"/><circle cx="584.2" cy="634.4" r="1.1" fill="#f4f6f4" opacity="0.4"/><circle cx="623.9" cy="631.9" r="1.1" fill="#f4f6f4" opacity="0.4"/><circle cx="927.2" cy="543.7" r="2.4" fill="#f4f6f4" opacity="1"/><circle cx="926.5" cy="565.3" r="1.95" fill="#f4f6f4" opacity="1"/><circle cx="884.0" cy="547.4" r="1.95" fill="#f4f6f4" opacity="1"/><circle cx="879.0" cy="545.9" r="1.35" fill="#f4f6f4" opacity="0.8"/><circle cx="870.7" cy="566.0" r="1.35" fill="#f4f6f4" opacity="0.8"/><circle cx="840.5" cy="601.2" r="1.95" fill="#f4f6f4" opacity="1"/><circle cx="842.5" cy="627.4" r="1.95" fill="#f4f6f4" opacity="1"/><circle cx="939.3" cy="627.9" r="1.95" fill="#f4f6f4" opacity="1"/><circle cx="985.0" cy="626.1" r="1.95" fill="#f4f6f4" opacity="1"/><circle cx="1040.6" cy="527.8" r="1.95" fill="#f4f6f4" opacity="1"/><circle cx="1072.2" cy="600.7" r="1.35" fill="#f4f6f4" opacity="0.8"/><circle cx="1058.9" cy="614.0" r="1.35" fill="#f0d9a8" opacity="0.8"/><circle cx="1061.4" cy="611.8" r="1.1" fill="#f4f6f4" opacity="0.4"/><circle cx="993.8" cy="591.7" r="1.35" fill="#f4f6f4" opacity="0.8"/><circle cx="1014.9" cy="577.8" r="1.1" fill="#f4f6f4" opacity="0.4"/><circle cx="1081.8" cy="572.3" r="1.1" fill="#f4f6f4" opacity="0.4"/><circle cx="1092.8" cy="571.8" r="1.1" fill="#f4f6f4" opacity="0.4"/><circle cx="1052.9" cy="683.4" r="1.35" fill="#f0d9a8" opacity="0.8"/><circle cx="869.9" cy="681.4" r="1.35" fill="#f4f6f4" opacity="0.8"/><circle cx="882.7" cy="636.9" r="1.35" fill="#f0d9a8" opacity="0.8"/><circle cx="935.0" cy="619.6" r="1.1" fill="#f4f6f4" opacity="0.4"/><circle cx="853.1" cy="589.7" r="1.1" fill="#f4f6f4" opacity="0.4"/><circle cx="850.1" cy="641.2" r="1.1" fill="#f4f6f4" opacity="0.4"/><circle cx="979.0" cy="517.5" r="1.1" fill="#f4f6f4" opacity="0.4"/><circle cx="947.8" cy="525.1" r="1.1" fill="#f4f6f4" opacity="0.4"/><circle cx="909.6" cy="547.7" r="1.1" fill="#f0d9a8" opacity="0.4"/><circle cx="910.9" cy="542.2" r="1.1" fill="#f4f6f4" opacity="0.4"/><circle cx="915.4" cy="536.9" r="1.1" fill="#f4f6f4" opacity="0.4"/><circle cx="933.3" cy="592.7" r="1.1" fill="#f4f6f4" opacity="0.4"/><circle cx="920.2" cy="669.6" r="1.1" fill="#f4f6f4" opacity="0.4"/><circle cx="969.9" cy="693.2" r="1.1" fill="#f4f6f4" opacity="0.4"/><circle cx="1103.4" cy="699.2" r="1.1" fill="#f4f6f4" opacity="0.4"/><circle cx="911.6" cy="700.0" r="1.1" fill="#f4f6f4" opacity="0.4"/><circle cx="1087.3" cy="678.9" r="1.1" fill="#f4f6f4" opacity="0.4"/><circle cx="875.4" cy="516.8" r="1.1" fill="#f4f6f4" opacity="0.4"/><circle cx="1003.9" cy="614.3" r="1.1" fill="#f4f6f4" opacity="0.4"/><circle cx="1028.0" cy="598.4" r="1.1" fill="#f4f6f4" opacity="0.4"/><circle cx="1125.8" cy="519.8" r="1.1" fill="#f4f6f4" opacity="0.4"/>
<circle cx="694.5" cy="134.3" r="3.2" fill="#fff"/>
<circle cx="732.0" cy="128.8" r="2.6" fill="#fff"/>
<ellipse cx="722.4" cy="705.0" rx="8" ry="4" fill="#fff"/><ellipse cx="722.4" cy="705.7" rx="15" ry="1.6" fill="#eaffff"/><path d="M720.2 703.5L722.4 687.5L724.6 703.5Z" fill="#eaffff"/>
</g>
</svg>

  </div>
  <svg id="bubble" width="340" height="310" viewBox="40 105 340 310" style="left:40px;top:105px">
   <defs><filter id="bsh" x="-10%" y="-10%" width="125%" height="125%" color-interpolation-filters="sRGB"><feGaussianBlur stdDeviation="3.6"/></filter>
   <clipPath id="bclip"><rect x="40" y="105" width="220" height="310"/></clipPath></defs>
   <rect x="58.5" y="122.5" width="249.5" height="261" rx="19" fill="#000" opacity=".58" filter="url(#bsh)"/>
   <path d="M75 120 H288.5 A18 18 0 0 1 306.5 138 V293.7 L358 399 L306.5 319 V363 A18 18 0 0 1 288.5 381 H75 A18 18 0 0 1 57 363 V138 A18 18 0 0 1 75 120 Z" fill="#fff"/>
   <path d="M306 128.5 V128 M75 120 H288.5 A18 18 0 0 1 306.5 138" fill="none" stroke="#8a8a8a" stroke-width="1" opacity=".0"/>
   <path d="M306.5 138 A18 18 0 0 0 288.5 120 H75 A18 18 0 0 0 57 138 V363 A18 18 0 0 0 75 381" fill="none" stroke="#777" stroke-width=".9" opacity=".8"/>
  </svg>
  <div class="bl" style="left:57px;top:205px;width:248px">capture avec prism10 et</div>
  <div class="bl" style="left:57px;top:226px;width:248px">débayérisée matrice</div>
  <div class="bl" style="left:57px;top:268px;width:248px">3</div>

  <div id="vscroll"></div>
  <div id="status"></div>
  <div id="tools"><div id="toolhead"></div><div id="toolbody"></div></div>
  <div id="toolsr"></div>
  <div id="menu">
   <span class="t" id="pslogo" style="left:11.5px;top:6.4px;font-size:23.4px;letter-spacing:-.3px;color:#b6b6b6;text-shadow:0 1px 0 #f4f4f4,0 -1px 0 #9c9c9c;transform:scaleX(.86)">Ps</span>
   <div class="vsep" style="left:534px;top:6px;height:20px"></div>
   <!-- Br -->
   <svg style="left:550.5px;top:8.5px" width="17" height="16" viewBox="0 0 17 16"><defs><linearGradient id="brg" x1="0" y1="0" x2="0" y2="1"><stop offset="0" stop-color="#7c7c7c"/><stop offset="1" stop-color="#949494"/></linearGradient></defs><path d="M.5 15.500V.5H14L16.500 2.500V15.500Z" fill="url(#brg)" stroke="#5a5a5a" stroke-width="1"/><path d="M.5 15V.5H14" fill="none" stroke="#333" stroke-width="1"/><text x="8.600" y="11.800" font-family="Liberation Sans,sans-serif" font-size="9.500" fill="#161616" text-anchor="middle">Br</text></svg>
   <!-- Mb -->
   <svg style="left:586px;top:8px" width="19" height="17" viewBox="0 0 19 17"><path d="M.5 16.5 V.5 H5.5 L7 2.5 H18.5 V16.5 Z" fill="#cfcfcf" stroke="#4a4a4a"/><text x="9.6" y="13" font-family="Liberation Sans,sans-serif" font-size="10.500" fill="#161616" text-anchor="middle">Mb</text></svg>
   <!-- film / arrange -->
   <svg style="left:622px;top:8px" width="19" height="17" viewBox="0 0 19 17"><rect x=".5" y="1" width="18" height="15" fill="#e2e2e2" stroke="#3a3a3a"/><rect x="1" y="1.5" width="17" height="4" fill="#3a3a3a"/><rect x="1" y="1.5" width="4" height="14" fill="#3a3a3a"/><g fill="#e8e8e8"><rect x="6" y="2.5" width="2" height="2"/><rect x="9.5" y="2.5" width="2" height="2"/><rect x="13" y="2.5" width="2" height="2"/><rect x="2" y="6.5" width="2" height="2"/><rect x="2" y="9.5" width="2" height="2"/><rect x="2" y="12.5" width="2" height="2"/></g></svg>
   <svg style="left:645.5px;top:14px" width="8" height="5" viewBox="0 0 8 5"><path d="M0 0H8L4 5Z" fill="#222"/></svg>
   <svg style="left:708.5px;top:14px" width="8" height="5" viewBox="0 0 8 5"><path d="M0 0H8L4 5Z" fill="#222"/></svg>
   <!-- layout -->
   <svg style="left:734.5px;top:8px" width="19" height="17" viewBox="0 0 19 17"><defs><linearGradient id="lyg" x1="0" y1="0" x2="0" y2="1"><stop offset="0" stop-color="#5a5a5a"/><stop offset="1" stop-color="#808080"/></linearGradient></defs><rect x=".5" y="1" width="18" height="15" fill="#ececec" stroke="#3a3a3a"/><rect x="2" y="2.5" width="8" height="12" fill="url(#lyg)"/><rect x="11.5" y="2.5" width="5.5" height="5" fill="url(#lyg)"/><rect x="11.5" y="9" width="5.5" height="5.5" fill="url(#lyg)"/></svg>
   <svg style="left:759px;top:14px" width="8" height="5" viewBox="0 0 8 5"><path d="M0 0H8L4 5Z" fill="#222"/></svg>
   <!-- screen mode -->
   <svg style="left:783px;top:8px" width="19" height="17" viewBox="0 0 19 17"><defs><linearGradient id="scg" x1="0" y1="0" x2="0" y2="1"><stop offset="0" stop-color="#5a5a5a"/><stop offset="1" stop-color="#8a8a8a"/></linearGradient></defs><path d="M.5 4V1H4M15 1H18.5V4M18.5 13V16H15M4 16H.5V13" fill="none" stroke="#3a3a3a" stroke-width="1"/><rect x="3" y="3.5" width="13" height="10" fill="#f0f0f0" stroke="#3a3a3a"/><rect x="4.5" y="5" width="10" height="7" fill="url(#scg)"/></svg>
   <svg style="left:807px;top:14px" width="8" height="5" viewBox="0 0 8 5"><path d="M0 0H8L4 5Z" fill="#222"/></svg>
   <!-- workspace switcher -->
   <div style="left:907px;top:7px;width:1px;height:20px;background:#6a6a6a"></div>
   <div style="left:908px;top:7px;width:1px;height:20px;background:#f0f0f0"></div>
   <div style="left:910px;top:7px;width:1px;height:20px;background:#6a6a6a"></div>
   <div style="left:911px;top:7px;width:1px;height:20px;background:#f0f0f0"></div>
   <div style="left:917px;top:5px;width:122px;height:23px;background:linear-gradient(180deg,#636363 0,#727272 45%,#8c8c8c 100%);border:1px solid #3c3c3c;box-shadow:inset 0 1px 1px rgba(0,0,0,.35)"></div>
<span class="t" style="left:52.3px;top:10.8px;font-size:12px;color:#1e1e1e;transform:scaleX(0.963);">Fichier</span>
<span class="t" style="left:104.5px;top:10.8px;font-size:12px;color:#1e1e1e;transform:scaleX(0.984);">Edition</span>
<span class="t" style="left:158.4px;top:10.8px;font-size:12px;color:#1e1e1e;transform:scaleX(0.953);">Image</span>
<span class="t" style="left:208.2px;top:10.8px;font-size:12px;color:#1e1e1e;transform:scaleX(0.941);">Calque</span>
<span class="t" style="left:262.3px;top:10.8px;font-size:12px;color:#1e1e1e;transform:scaleX(0.960);">Sélection</span>
<span class="t" style="left:328.6px;top:10.8px;font-size:12px;color:#1e1e1e;transform:scaleX(0.960);">Filtre</span>
<span class="t" style="left:371.2px;top:10.8px;font-size:12px;color:#1e1e1e;transform:scaleX(1.020);">Affichage</span>
<span class="t" style="left:439.5px;top:10.8px;font-size:12px;color:#1e1e1e;transform:scaleX(0.936);">Fenêtre</span>
<span class="t" style="left:496.2px;top:10.8px;font-size:12px;color:#1e1e1e;transform:scaleX(0.999);">Aide</span>
<span class="t" style="left:679.5px;top:10.8px;font-size:12px;color:#2a2a2a;transform:scaleX(0.899);">16,7</span>
<span class="t" style="left:925.5px;top:10.3px;font-size:12px;font-weight:bold;color:#fff;transform:scaleX(0.940);">Les indispensables</span>
<span class="t" style="left:1054.2px;top:10.3px;font-size:12px;font-weight:bold;color:#1a1a1a;transform:scaleX(0.947);">Conception</span>
<span class="t" style="left:1205.9px;top:10.4px;font-size:12.3px;color:#2a2a2a;transform:scaleX(0.843);">CS Live</span>
   <svg style="left:1136.5px;top:10px" width="15" height="12" viewBox="0 0 15 12"><path d="M0 0H3.2L8 6L3.2 12H0L4.6 6Z M6.6 0H9.8L14.6 6L9.8 12H6.6L11.2 6Z" fill="#4a4a4a"/></svg>
   <div class="vsep" style="left:1166px;top:6px;height:20px"></div>
   <!-- CS Live -->
   <svg style="left:1177px;top:4px" width="26" height="24" viewBox="1177 4 26 24"><circle cx="1189.4" cy="17.3" r="6.2" fill="none" stroke="#2585bd" stroke-width="4.4"/><path d="M1180 8.6H1188" stroke="#1a1a1a" stroke-width="1.4"/><path d="M1178.600 8.600l3-2.800v5.600Z M1189.400 8.600l-3-2.800v5.600Z" fill="#1a1a1a"/><g stroke="#2f8fc6" stroke-width="1.2" stroke-linecap="round"><path d="M1197.5 7.2V13.4 M1194.8 8.8L1200.2 11.8 M1200.2 8.8L1194.8 11.8"/></g></svg>
   <svg style="left:1245px;top:15px" width="8" height="5" viewBox="0 0 8 5"><path d="M0 0H8L4 4.6Z" fill="#2a2a2a"/></svg>
   <!-- window buttons -->
   <div id="wb" style="left:1265px;top:7px;width:94px;height:18px;border:1px solid #4a4a4a;border-radius:4px;background:linear-gradient(180deg,#f4f4f4 0,#dedede 45%,#bdbdbd 50%,#d2d2d2 100%);overflow:hidden;box-shadow:0 0 0 1px rgba(255,255,255,.55)">
     <div style="left:24px;top:0;width:1px;height:16px;background:#4a4a4a"></div>
     <div style="left:49px;top:0;width:1px;height:16px;background:#4a4a4a"></div>
     <div style="left:50px;top:0;width:42px;height:16px;background:linear-gradient(180deg,#eba79b 0,#d8685a 45%,#c33724 50%,#d5503c 85%,#e07a60 100%)"></div>
     <svg style="left:6px;top:7px" width="13" height="6" viewBox="0 0 13 6"><rect x=".5" y=".5" width="12" height="5" rx="1" fill="#fff" stroke="#333"/></svg>
     <svg style="left:30px;top:2px" width="14" height="13" viewBox="0 0 14 13"><rect x="4.5" y="1.5" width="8" height="6.5" fill="#fff" stroke="#333" stroke-width="1.2"/><rect x="6.5" y="3.6" width="4" height="2.2" fill="#d8d8d8" stroke="#333" stroke-width=".8"/><rect x="1.5" y="5" width="8" height="6.5" fill="#fff" stroke="#333" stroke-width="1.2"/><rect x="3.6" y="7.2" width="3.8" height="2.2" fill="#d8d8d8" stroke="#333" stroke-width=".8"/></svg>
     <svg style="left:62px;top:2px" width="18" height="13" viewBox="0 0 18 13"><path d="M2.5 1.5H6.6L9 4.2L11.4 1.5H15.5L11.2 6.4L15.8 11.5H11.6L9 8.6L6.4 11.5H2.2L6.8 6.4Z" fill="#fff" stroke="#5a2a22" stroke-width="1" stroke-linejoin="round"/></svg>
   </div>
  </div>

  <div id="opt">
   <svg style="left:9px;top:38px" width="5" height="26" viewBox="0 0 5 26"><g fill="#9a9a9a"><rect x="0" y="0" width="1" height="1"/><rect x="3" y="0" width="1" height="1"/><rect x="0" y="2" width="1" height="1"/><rect x="3" y="2" width="1" height="1"/><rect x="0" y="4" width="1" height="1"/><rect x="3" y="4" width="1" height="1"/><rect x="0" y="6" width="1" height="1"/><rect x="3" y="6" width="1" height="1"/><rect x="0" y="8" width="1" height="1"/><rect x="3" y="8" width="1" height="1"/><rect x="0" y="10" width="1" height="1"/><rect x="3" y="10" width="1" height="1"/><rect x="0" y="12" width="1" height="1"/><rect x="3" y="12" width="1" height="1"/><rect x="0" y="14" width="1" height="1"/><rect x="3" y="14" width="1" height="1"/><rect x="0" y="16" width="1" height="1"/><rect x="3" y="16" width="1" height="1"/><rect x="0" y="18" width="1" height="1"/><rect x="3" y="18" width="1" height="1"/><rect x="0" y="20" width="1" height="1"/><rect x="3" y="20" width="1" height="1"/><rect x="0" y="22" width="1" height="1"/><rect x="3" y="22" width="1" height="1"/></g></svg>
   <svg style="left:23px;top:40px" width="18" height="18" viewBox="0 0 18 18"><path d="M1.6 16.4 L2.2 13.6 L9.2 6.6 L11.4 8.8 L4.4 15.8 Z" fill="#f4f4f4" stroke="#3a3a3a" stroke-width="1"/><path d="M8.4 5.8 L12.2 9.6" stroke="#2a2a2a" stroke-width="2.6" stroke-linecap="round"/><path d="M10.8 6.8 L14 3.6" stroke="#2a2a2a" stroke-width="4.2" stroke-linecap="round"/></svg>
   <svg style="left:47px;top:48px" width="7" height="4" viewBox="0 0 7 4"><path d="M0 0H7L3.5 4Z" fill="#111"/></svg>
   <div class="vsep" style="left:63px;top:35px;height:30px"></div>
   <div class="dd" style="left:102px;top:41px;width:118px;height:18px"></div>
   <svg style="left:205px;top:47px" width="10" height="7" viewBox="0 0 10 7"><path d="M.8 1L5 5.6L9.2 1" fill="none" stroke="#444" stroke-width="1.2"/></svg>
   <div class="dd" style="left:288px;top:41px;width:110px;height:18px"></div>
   <svg style="left:384px;top:47px" width="10" height="7" viewBox="0 0 10 7"><path d="M.8 1L5 5.6L9.2 1" fill="none" stroke="#444" stroke-width="1.2"/></svg>
   <div class="vsep" style="left:406px;top:36px;height:26px"></div>
   <div style="left:416px;top:43px;width:11px;height:11px;background:#fff;border:1px solid #3a3a3a"></div>
   <svg style="left:417px;top:44px" width="9" height="9" viewBox="0 0 9 9"><path d="M1.4 4.4L3.6 6.8L7.8 1.6" fill="none" stroke="#222" stroke-width="1.1"/></svg>
   <div class="vsep" style="left:1020px;top:36px;height:27px"></div>
<span class="t" style="left:69.5px;top:43.7px;font-size:11px;color:#111;transform:scaleX(0.866);">Taille :</span>
<span class="t" style="left:106.5px;top:43.7px;font-size:11px;color:#111;transform:scaleX(0.912);">Moyenne 11 x 11</span>
<span class="t" style="left:228.5px;top:43.7px;font-size:11px;color:#111;transform:scaleX(0.926);">Echantillon :</span>
<span class="t" style="left:293.0px;top:43.7px;font-size:11px;color:#111;transform:scaleX(0.873);">Tous les calques</span>
<span class="t" style="left:430.9px;top:43.3px;font-size:11px;color:#111;transform:scaleX(0.912);">Afficher l'anneau d'échantillonnage</span>
  </div>

  <div id="tab" style="left:42px;top:67px;width:217px;height:20px;background:linear-gradient(180deg,#ececec 0,#dcdcdc 50%,#d0d0d0 100%);border-right:1px solid #8c8c8c;border-bottom:1px solid #c0c0c0"></div>
  <div style="left:242px;top:71px;width:12px;height:12px;border:1px solid #8a8a8a;background:#d8d8d8"></div>
  <svg style="left:244.5px;top:73.5px" width="7" height="7" viewBox="0 0 7 7"><path d="M.5 .5L6.5 6.5M6.5 .5L.5 6.5" stroke="#444" stroke-width="1.2"/></svg>
<span class="t" style="left:51.8px;top:71.5px;font-size:11.2px;font-weight:bold;color:#3a3a3a;transform:scaleX(0.973);">m42 matrice 3.jpg @ 16,7% (RVB/8)</span>

  <svg id="toolicons" width="36" height="580" viewBox="5 67 36 580" style="left:5px;top:67px">
   <defs>
    <linearGradient id="tg" x1="0" y1="0" x2="0" y2="1"><stop offset="0" stop-color="#3a3a3a"/><stop offset="1" stop-color="#6a6a6a"/></linearGradient>
    <linearGradient id="tg2" x1="0" y1="0" x2="0" y2="1"><stop offset="0" stop-color="#8a8a8a"/><stop offset="1" stop-color="#bdbdbd"/></linearGradient>
    <path id="fly" d="M0 3.2V0H-3.2Z" transform="rotate(90)" />
   </defs>
   <!-- header arrows -->
   <path d="M8 69.5V76.5L11.2 73Z M12 69.5V76.5L15.2 73Z" fill="#d8d8d8"/>
   <!-- grip -->
   <g fill="#9c9c9c"><path d="M10 83h1v1h-1zM12 83h1v1h-1zM14 83h1v1h-1zM16 83h1v1h-1zM18 83h1v1h-1zM20 83h1v1h-1zM22 83h1v1h-1zM24 83h1v1h-1zM26 83h1v1h-1zM28 83h1v1h-1zM30 83h1v1h-1zM32 83h1v1h-1zM34 83h1v1h-1zM36 83h1v1h-1zM10 85h1v1h-1zM12 85h1v1h-1zM14 85h1v1h-1zM16 85h1v1h-1zM18 85h1v1h-1zM20 85h1v1h-1zM22 85h1v1h-1zM24 85h1v1h-1zM26 85h1v1h-1zM28 85h1v1h-1zM30 85h1v1h-1zM32 85h1v1h-1zM34 85h1v1h-1zM36 85h1v1h-1z"/></g>
   <!-- selected tool bg -->
   <rect x="10" y="207" width="26" height="23" fill="#a9c5e2"/><rect x="9" y="230" width="28" height="1" fill="#8fa4ba"/>
   <!-- move -->
   <path d="M15 96.5V107.5L21.5 102.5Z" fill="#333"/>
   <path d="M27.5 100.5v8M23.5 104.5h8" stroke="#333" stroke-width="1.1"/><path d="M27.5 99.2l1.8 2h-3.6zM27.5 109.8l1.8-2h-3.6zM22.2 104.5l2-1.8v3.6zM32.8 104.5l-2-1.8v3.6z" fill="#333"/>
   <!-- marquee -->
   <rect x="16.5" y="119.5" width="13" height="12" fill="none" stroke="#2e2e2e" stroke-width="1.2" stroke-dasharray="3 1.6"/>
   <!-- lasso -->
   <ellipse cx="23" cy="147" rx="7.4" ry="4.6" fill="none" stroke="#3a3a3a" stroke-width="1.4" transform="rotate(-12 23 147)"/><path d="M17.5 150.5c-1.8 1.5-.6 3.2 1.2 2.8 1.6-.4 1.2-2-.2-1.6-1.2.4-.6 2.6 1 3.6" fill="none" stroke="#3a3a3a" stroke-width="1.2"/>
   <!-- quick selection -->
   <ellipse cx="19.5" cy="173.5" rx="4.6" ry="6" fill="none" stroke="#2e2e2e" stroke-width="1.2" stroke-dasharray="1.1 1.5"/><path d="M36 167l-7 7" stroke="#777" stroke-width="1.6"/><path d="M23 177.6c2.8 1 5.6-.8 6.8-3.8l-1.8-1.4c-2 .6-3.600 2.600-5 5.200z" fill="#333"/>
   <!-- crop -->
   <path d="M19.500 187v12.500h12.500M15.500 191h12.500v12.500" fill="none" stroke="#2a2a2a" stroke-width="1.9"/><path d="M20.500 198.500L34 186.500" stroke="#444" stroke-width=".9"/>
   <!-- eyedropper (selected) -->
   <path d="M17.200 227.200l.6-2.600 6.800-6.800 2 2-6.800 6.800z" fill="#f4f8fc" stroke="#2a3a4a" stroke-width="1"/><path d="M23.800 216.800l3.800 3.800" stroke="#1e2a36" stroke-width="2.600" stroke-linecap="round"/><path d="M26.400 217.600l3-3" stroke="#1e2a36" stroke-width="4.200" stroke-linecap="round"/>
   <!-- healing brush -->
   <ellipse cx="19" cy="244.500" rx="4.600" ry="6" fill="none" stroke="#2e2e2e" stroke-width="1.100" stroke-dasharray="1.100 1.500"/><path d="M21.500 250.500l11-9.500" stroke="#3c3c3c" stroke-width="5.600" stroke-linecap="round"/><path d="M25.500 247l3.400-3" stroke="#8a8a8a" stroke-width="3.800"/>
   <!-- brush -->
   <path d="M33 261l-7 7.500" stroke="#666" stroke-width="1.800"/><path d="M15 273c3.500-.4 5-3.600 8-5.200 1.600-.6 3.400.8 3.400 2.200-1.600 3.200-6.800 4.600-11.400 3z" fill="#2e2e2e"/>
   <!-- stamp -->
   <circle cx="22.500" cy="285.500" r="2.400" fill="#333"/><path d="M21.300 287h2.400v4.500h-2.400z" fill="#333"/><path d="M15.500 291.500h14.500v3.200h-14.500z" fill="#444"/><path d="M15 295.500h15.500v1.600h-15.500z" fill="#2a2a2a"/>
   <!-- history brush -->
   <path d="M34.500 307.500l-7.500 8" stroke="#666" stroke-width="1.800"/><path d="M15.500 319.500c3.500-.4 5-3.200 8-4.800 1.600-.6 3.200.8 3.200 2-1.600 3-6.600 4.400-11.200 2.800z" fill="#2e2e2e"/><path d="M18.500 311c2-2.600 5.800-3.400 8.600-1.600" fill="none" stroke="#333" stroke-width="1.300"/><path d="M16.200 310.500l4.400-.4-2.400 3.600z" fill="#333"/><path d="M33.500 313.500v.1M33 316v.1M31.500 318v.1" stroke="#333" stroke-width="1" stroke-linecap="round" stroke-dasharray=".1 2"/>
   <!-- eraser -->
   <path d="M15.500 338.500l6.500-7.500h12.500l-6 7.500z" fill="#8c8c8c"/><path d="M15.500 338.500h13v4.200h-13z" fill="#555"/><path d="M28.500 338.500l6-7.500v4.200l-6 7.500z" fill="#3e3e3e"/>
   <!-- paint bucket -->
   <path d="M15.500 361.500l8-6.500 6.500 6.800-8.400 6.200z" fill="url(#tg2)" stroke="#333" stroke-width="1.100"/><path d="M19.500 357.500v-4.500c0-2.400 4.400-2.400 4.400 0v4" fill="none" stroke="#333" stroke-width="1.200"/><path d="M30 361.800c2.600.6 3.800 2 3.800 3.600 0 1.400-.6 1.800-1.400 1.800s-1.400-.6-1.400-1.800z" fill="#222"/>
   <!-- blur (drop) -->
   <path d="M22.500 375.500c2.400 3.800 5.200 6.600 5.200 9.600a5.200 5 0 0 1-10.400 0c0-3 2.800-5.800 5.200-9.600z" fill="url(#tg2)" stroke="#555" stroke-width=".9"/>
   <!-- dodge -->
   <circle cx="21" cy="404.500" r="4.800" fill="url(#tg)"/><path d="M24.500 408l5 4.500" stroke="#222" stroke-width="1.800"/>
   <!-- separators -->
   <path d="M9 419.500h28" stroke="#8e8e8e" stroke-width="1"/><path d="M9 420.500h28" stroke="#ececec" stroke-width="1"/>
   <path d="M9 515.500h28" stroke="#8e8e8e" stroke-width="1"/><path d="M9 516.500h28" stroke="#ececec" stroke-width="1"/>
   <!-- pen -->
   <path d="M15.800 440.500l3.200-9 7.200-3.800 4 4-3.800 7.200z" fill="#f0f0f0" stroke="#333" stroke-width="1.100" stroke-linejoin="round"/><path d="M16.200 440l5.800-5.800" stroke="#333" stroke-width=".9"/><circle cx="22.500" cy="433.800" r="1.100" fill="#333"/><path d="M27 426.500l5 5 2-2-5-5z" fill="#333"/>
   <!-- type -->
   <text x="23" y="461.800" font-family="Liberation Serif,serif" font-size="18.500" fill="#333" text-anchor="middle">T</text>
   <!-- path selection -->
   <path d="M19.500 471.500v13.500l3.200-3 2.400 5 2.200-1-2.400-5h4.600z" fill="#2a2a2a"/>
   <!-- rectangle -->
   <rect x="16.500" y="496.500" width="13" height="11" fill="url(#tg2)" stroke="#444" stroke-width="1.100"/>
   <!-- hand -->
   <path d="M20.500 535.500c-1.600-1.800-3-3.600-4.800-5.200-.8-.8.400-2 1.400-1.400l2.400 1.800v-6.400c0-1.300 1.800-1.300 1.800 0v-1.400c0-1.400 2-1.400 2 0v1.200c0-1.300 1.900-1.300 1.900 0v1.600c0-1.200 1.800-1.200 1.800 0v6.200c0 1.600-.6 2.600-1.200 3.600z" fill="#f6f6f6" stroke="#2a2a2a" stroke-width="1" stroke-linejoin="round"/>
   <!-- zoom -->
   <circle cx="20.500" cy="549" r="4.800" fill="#dcdcdc" stroke="#333" stroke-width="1.300"/><path d="M24.200 552.800l5.800 5.600" stroke="#2a2a2a" stroke-width="2.200" stroke-linecap="round"/>
   <!-- default / swap colors -->
   <rect x="13.500" y="572.500" width="6" height="6" fill="#fff" stroke="#555" stroke-width=".8"/><rect x="10" y="569" width="6.500" height="6.500" fill="#111"/>
   <path d="M28 573.500c0-2.600 2-3 4.200-3M35.500 574v0M32.500 571.500c3 0 3.400 2 3.400 5.500" fill="none" stroke="#222" stroke-width="1.200"/><path d="M26.200 573.800l1.800-2.800 1.800 2.800zM34 576.200l1.900 2.800 1.900-2.800z" fill="#222"/>
   <!-- fg/bg colours -->
   <rect x="18" y="594" width="20" height="20" fill="#fff"/>
   <rect x="8" y="584" width="20" height="20" fill="#1d1d1d" stroke="#f4f4f4" stroke-width="1"/>
   <!-- quick mask -->
   <rect x="14.500" y="621.500" width="16" height="12" fill="#fff" stroke="#222" stroke-width="1"/><path d="M15 634.500h16.500v-12" fill="none" stroke="#555" stroke-width="1"/><circle cx="22.500" cy="627.500" r="3.800" fill="#f4f4f4" stroke="#333" stroke-width=".9"/>
   <!-- flyout triangles -->
   <g fill="#111"><path d="M33.8 132.8v3.4h-3.4zM33.8 155.8v3.4h-3.4zM33.8 178.8v3.4h-3.4zM33.8 201.8v3.4h-3.4zM33.8 226.8v3.4h-3.4zM33.8 251.8v3.4h-3.4zM33.8 274.8v3.4h-3.4zM33.8 298.8v3.4h-3.4zM33.8 321.8v3.4h-3.4zM33.8 344.8v3.4h-3.4zM33.8 367.8v3.4h-3.4zM33.8 390.8v3.4h-3.4zM33.8 413.8v3.4h-3.4zM33.8 440.8v3.4h-3.4zM33.8 463.8v3.4h-3.4zM33.8 486.8v3.4h-3.4zM33.8 509.8v3.4h-3.4zM33.8 535.8v3.4h-3.4z"/></g>
  </svg>

  <div id="st">
   <div style="left:42px;top:747px;width:1304px;height:1px;background:#fff"></div>
   <div style="left:43px;top:748px;width:46px;height:14px;background:#fff"></div>
   <div style="left:89px;top:748px;width:23px;height:14px;background:#dcdcdc;border-left:1px solid #9a9a9a;border-right:1px solid #9a9a9a"></div>
   <svg style="left:94px;top:748.5px" width="13" height="13" viewBox="0 0 13 13"><circle cx="6.5" cy="6.5" r="5.6" fill="#cfcfcf" stroke="#8a8a8a" stroke-width="1.2"/><path d="M4 3.6H7.4L9.6 5.8V9.6H4Z" fill="#e8e8e8" stroke="#666" stroke-width=".9"/><path d="M7.2 3.8V6H9.4" fill="none" stroke="#666" stroke-width=".9"/></svg>
   <div style="left:112px;top:748px;width:172px;height:14px;background:#dcdcdc"></div>
   <div style="left:284px;top:748px;width:13px;height:14px;background:#e4e4e4;border-left:1px solid #9a9a9a;border-right:1px solid #9a9a9a"></div>
   <svg style="left:287px;top:750px" width="7" height="10" viewBox="0 0 7 10"><path d="M.5 .5L6 5L.5 9.5Z" fill="#111"/></svg>
   <svg style="left:301px;top:750.5px" width="7" height="9" viewBox="0 0 7 9"><path d="M5.2 1L1.6 4.5L5.2 8" fill="none" stroke="#b0b0b0" stroke-width="1.8"/></svg>
   <svg style="left:1333.5px;top:750px" width="7" height="9" viewBox="0 0 7 9"><path d="M1.8 1L5.4 4.5L1.8 8" fill="none" stroke="#b0b0b0" stroke-width="1.8"/></svg>
   <div style="left:1346px;top:747px;width:15px;height:15px;background:#dcdcdc"></div>
   <svg style="left:1349px;top:93.5px" width="9" height="7" viewBox="0 0 9 7"><path d="M1 5.4L4.5 1.8L8 5.4" fill="none" stroke="#b0b0b0" stroke-width="1.8"/></svg>
   <svg style="left:1349px;top:735.5px" width="9" height="7" viewBox="0 0 9 7"><path d="M1 1.6L4.5 5.2L8 1.6" fill="none" stroke="#b0b0b0" stroke-width="1.8"/></svg>
<span class="t" style="left:48.0px;top:750.0px;font-size:11px;color:#111;transform:scaleX(0.879);">16,67 %</span>
<span class="t" style="left:120.0px;top:750.0px;font-size:11px;color:#222;transform:scaleX(0.923);">L'expo ne fonctionne qu'en 32-bits</span>
  </div>

  <div id="fl"></div><div id="fl2"></div><div id="fr"></div><div id="frt"></div><div id="fb"></div><div id="fbl"></div><div id="fbr"></div>
</div>
</body>
</html>
